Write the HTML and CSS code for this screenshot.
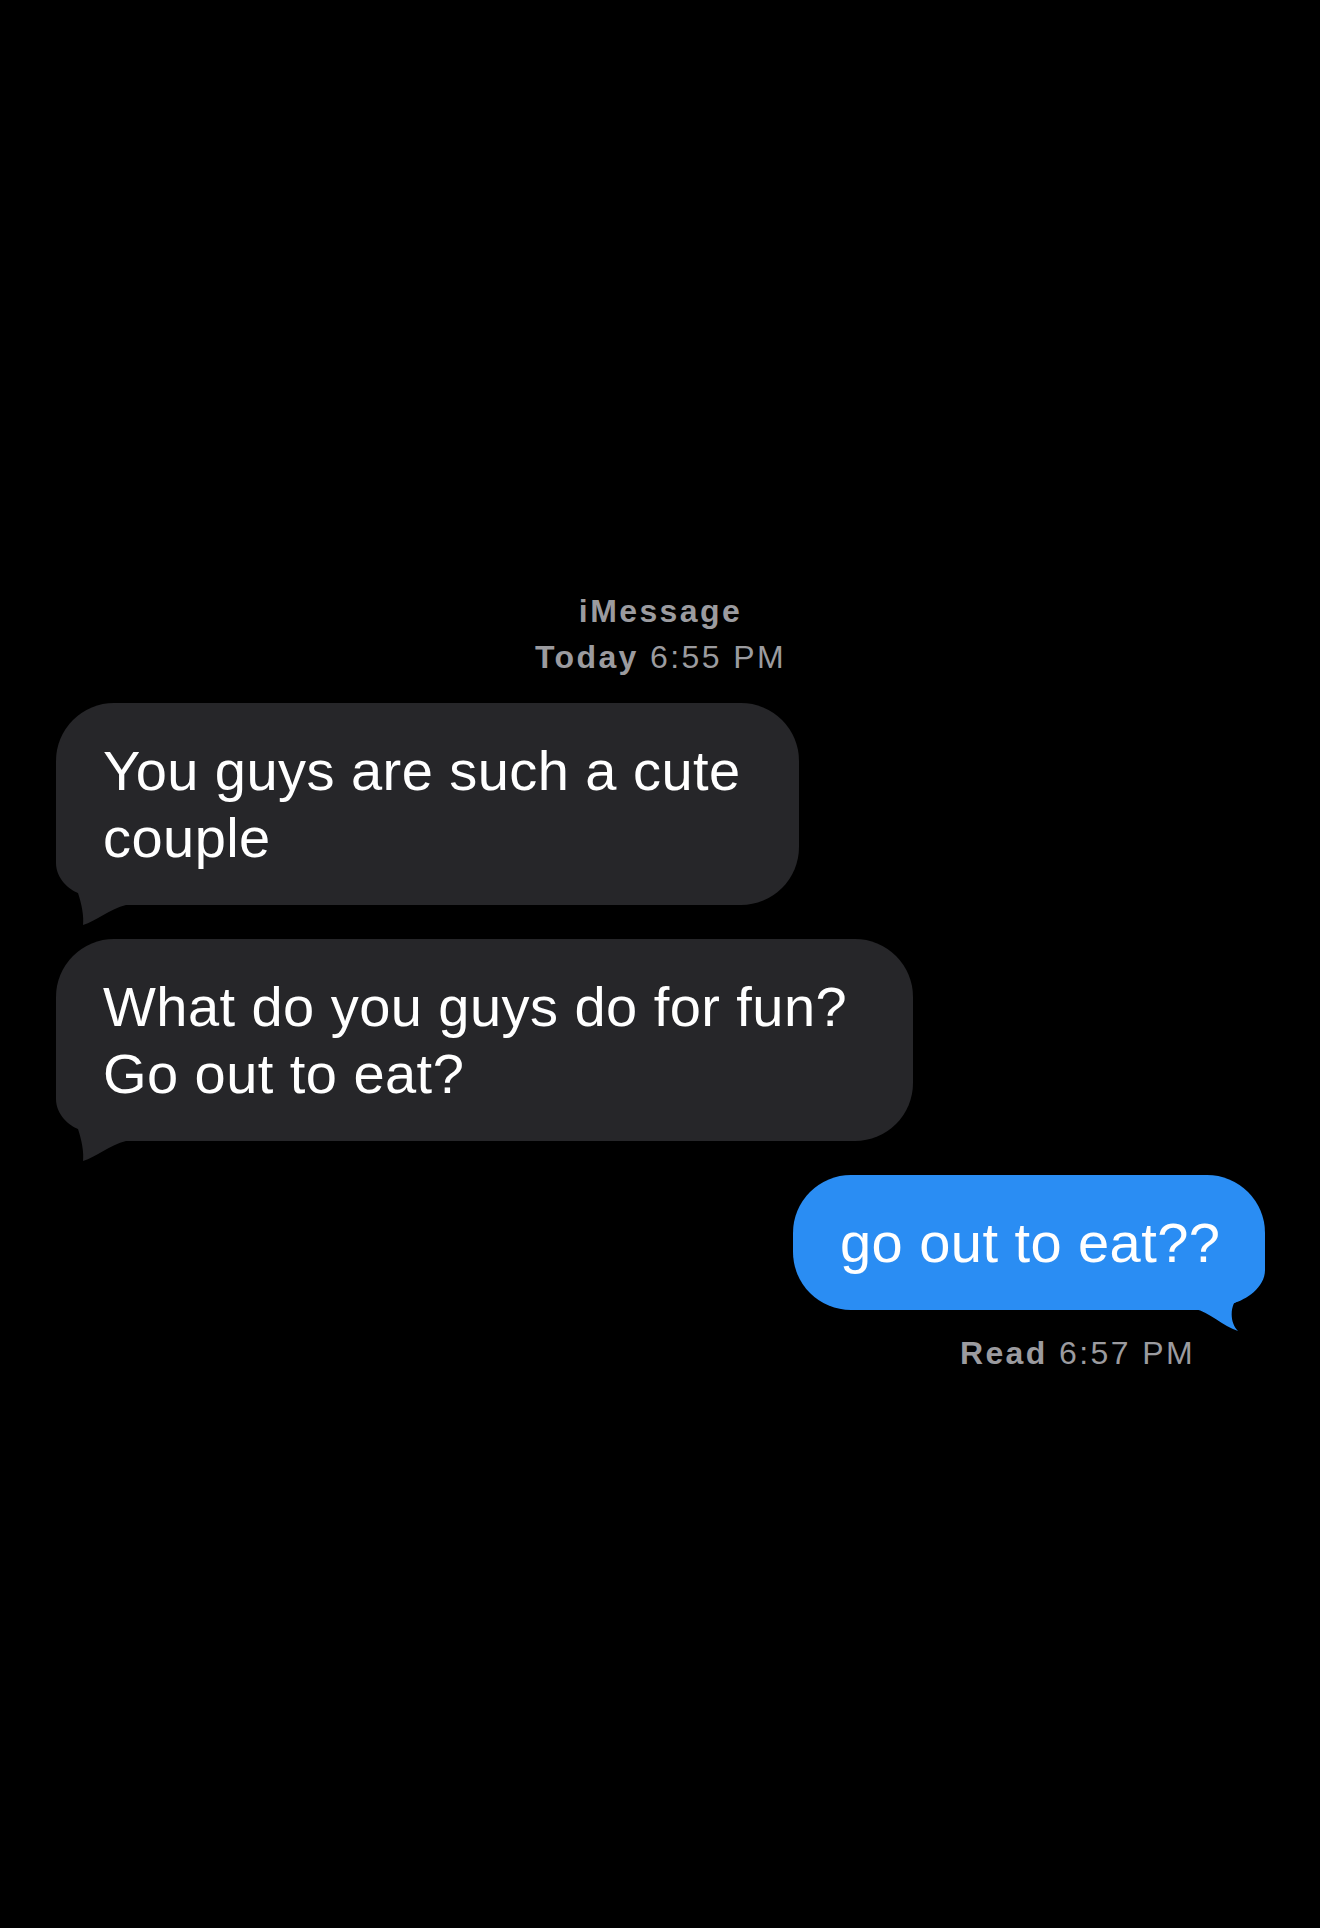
FILE: index.html
```html
<!DOCTYPE html>
<html lang="en">

<head>
    <meta charset="utf-8">
    <link rel="stylesheet" href="styles.css">
</head>

<body>
    <div class="thread">
        <div class="thread__header">
            <div class="thread__service">iMessage</div>
            <div class="thread__time"><b>Today</b> 6:55 PM</div>
        </div>

        <div class="bubble bubble--in bubble--first">
            You guys are such a cute<br>couple
            <svg class="bubble__tail" width="75" height="95" viewBox="0 0 75 95">
                <path d="M0,0 L70,0 L70,28 C70,44 56,55 48,58 C44,70 42,82 43,90 C30,86 16,74 0,70 Z" />
            </svg>
        </div>

        <div class="bubble bubble--in bubble--second">
            What do you guys do for fun?<br>Go out to eat?
            <svg class="bubble__tail" width="75" height="95" viewBox="0 0 75 95">
                <path d="M0,0 L70,0 L70,28 C70,44 56,55 48,58 C44,70 42,82 43,90 C30,86 16,74 0,70 Z" />
            </svg>
        </div>

        <div class="bubble bubble--out">
            go out to eat??
            <svg class="bubble__tail" width="75" height="95" viewBox="0 0 75 95">
                <path d="M0,0 L70,0 L70,30 C70,48 50,60 39,63 C35,72 36,84 43,91 C28,86 14,72 0,69 Z" />
            </svg>
        </div>

        <div class="thread__receipt"><b>Read</b> 6:57 PM</div>
    </div>
</body>

</html>
```

FILE: styles.css
```css
*,
*::after,
*::before {
    box-sizing: border-box;
}

body {
    margin: 0;
    background-color: #000;
    font-family: "Liberation Sans", Arial, sans-serif;
}

.thread {
    display: flex;
    flex-direction: column;
    min-height: 1928px;
    padding: 588px 55px 0 56px;
}

.thread__header {
    text-align: center;
    color: #9b9b9f;
    font-size: 32px;
    line-height: 46px;
    letter-spacing: 2.4px;
    margin-bottom: 23px;
}

.thread__service {
    font-weight: bold;
}

.bubble {
    position: relative;
    z-index: 0;
    color: #fff;
    font-size: 56px;
    line-height: 67px;
    letter-spacing: 0.45px;
    padding: 34px 0 34px 47px;
    border-radius: 58px;
}

.bubble + .bubble {
    margin-top: 34px;
}

.bubble--in {
    align-self: flex-start;
    background-color: #262629;
}

.bubble--first {
    width: 743px;
}

.bubble--second {
    width: 857px;
}

.bubble--out {
    align-self: flex-end;
    width: 472px;
    background-color: #2a8df3;
}

/* tail sits over the bottom corner, under the text */
.bubble__tail {
    position: absolute;
    bottom: -25px;
    z-index: -1;
    display: block;
}

.bubble--in .bubble__tail {
    left: -5px;
    transform: scaleX(-1);
    fill: #262629;
}

.bubble--out .bubble__tail {
    right: -5px;
    fill: #2a8df3;
}

.thread__receipt {
    align-self: flex-end;
    margin: 20px 70px 0 0;
    color: #9b9b9f;
    font-size: 32px;
    line-height: 46px;
    letter-spacing: 2.4px;
}
```
